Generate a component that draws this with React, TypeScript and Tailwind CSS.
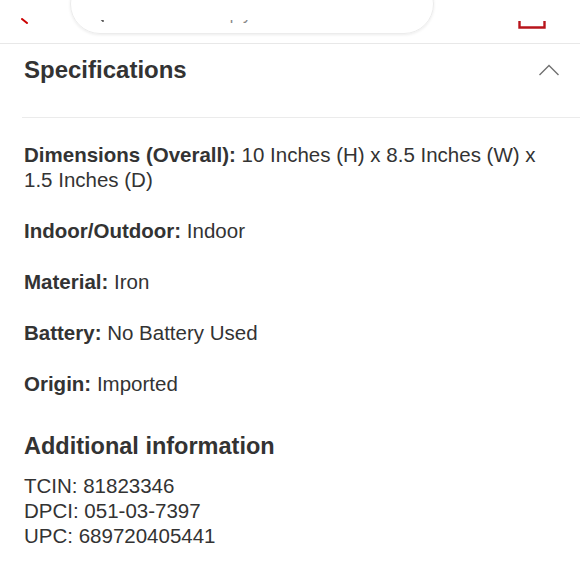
const font = { fontFamily: '"Liberation Sans", Arial, Helvetica, sans-serif' };

const specs = [
  { label: 'Dimensions (Overall):', value: '10 Inches (H) x 8.5 Inches (W) x 1.5 Inches (D)' },
  { label: 'Indoor/Outdoor:', value: 'Indoor' },
  { label: 'Material:', value: 'Iron' },
  { label: 'Battery:', value: 'No Battery Used' },
  { label: 'Origin:', value: 'Imported' },
];

const extra = ['TCIN: 81823346', 'DPCI: 051-03-7397', 'UPC: 689720405441'];

// header is scrolled mostly out of view, only its lower strip shows
function TopBar() {
  return (
    <header className="h-[44px] border-b border-[#e8e8e8] flex items-end overflow-hidden">
      <div className="w-[70px] shrink-0 h-full flex items-end pl-[21px] pb-[19px]">
        <svg width="8" height="6" viewBox="0 0 8 6" fill="none">
          <path d="M1 1 L6 5" stroke="#cc0000" strokeWidth="2" strokeLinecap="round" />
        </svg>
      </div>
      <div className="w-[364px] h-[60px] shrink-0 mb-[9px] rounded-full border border-[#ececec] shadow-[0_1px_3px_rgba(0,0,0,0.08)] pl-[20px]">
        <div className="mt-[45px] h-[5px] overflow-hidden flex items-start gap-[10px]">
          <svg width="14" height="14" viewBox="0 0 14 14" fill="none" className="-mt-[11px] shrink-0">
            <circle cx="5" cy="5" r="5" stroke="#555" strokeWidth="1.6" />
            <path d="M8.5 8.5 L12 12" stroke="#555" strokeWidth="1.8" strokeLinecap="round" />
          </svg>
          <span className="-mt-[13px] text-[16px] leading-[16px] text-[#888] whitespace-nowrap" style={font}>
            what can we help you find?
          </span>
        </div>
      </div>
      <div className="flex-1 h-full flex items-end justify-end pr-[34px] pb-[14px]">
        <svg width="28" height="8" viewBox="0 0 28 8" fill="none">
          <path d="M1.5 0 V6.5 H26.5 V0" stroke="#b8141b" strokeWidth="2.4" />
        </svg>
      </div>
    </header>
  );
}

export default function App() {
  return (
    <div className="w-[580px] h-[580px] bg-white text-[#333] overflow-hidden" style={font}>
      <TopBar />
      <div className="pl-[24px]">
        <div className="h-[74px] flex items-center justify-between pr-[20px] border-b border-[#ebebeb] -ml-[2px] pl-[2px]">
          <h2 className="text-[24px] leading-[30px] font-bold mb-[22px]">Specifications</h2>
          <svg width="22" height="12" viewBox="0 0 22 12" fill="none" className="mb-[22px]">
            <path d="M1.5 11 L11 1.5 L20.5 11" stroke="#707070" strokeWidth="1.4" />
          </svg>
        </div>
        <div className="pr-[24px] pt-[24px] flex flex-col gap-[26px] text-[20.5px] leading-[25px]">
          {specs.map((s) => (
            <p key={s.label}>
              <b className="font-bold">{s.label}</b> {s.value}
            </p>
          ))}
        </div>
        <h3 className="mt-[35px] text-[23.5px] leading-[30px] font-bold">Additional information</h3>
        <div className="mt-[12px] text-[20.5px] leading-[25px]">
          {extra.map((t) => (
            <p key={t}>{t}</p>
          ))}
        </div>
      </div>
    </div>
  );
}
